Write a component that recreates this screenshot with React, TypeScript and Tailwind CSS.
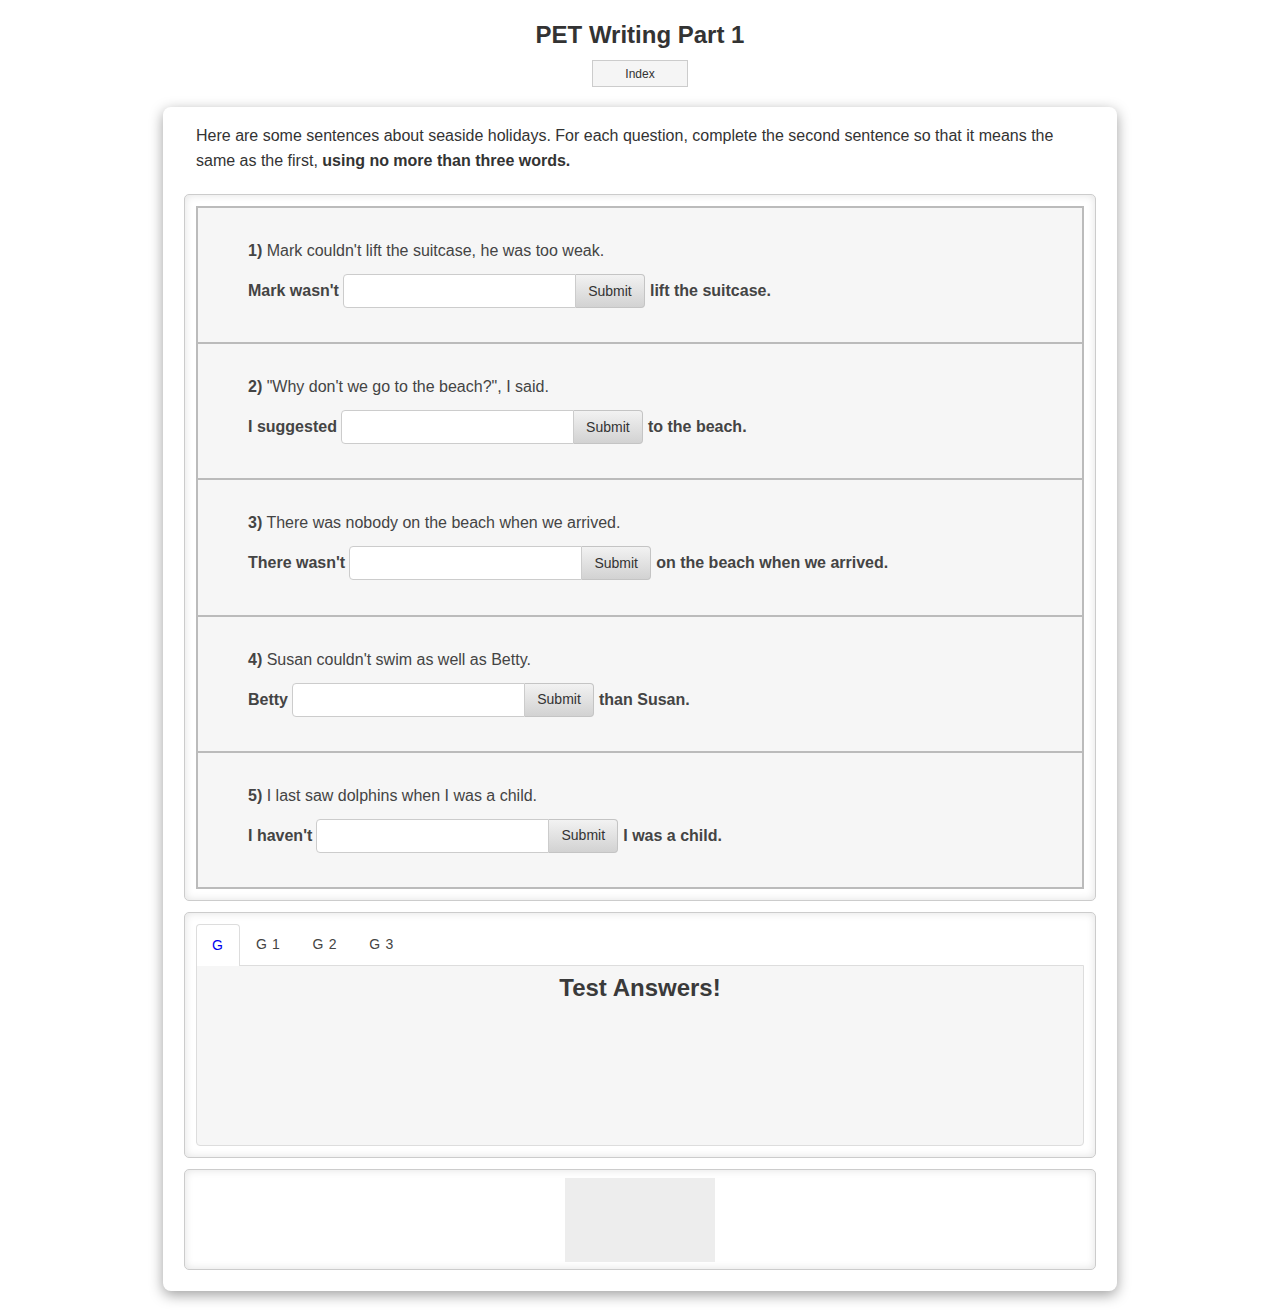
import React from "react";

const questions = [
  { n: "1)", q: "Mark couldn't lift the suitcase, he was too weak.", pre: "Mark wasn't", post: "lift the suitcase." },
  { n: "2)", q: "\"Why don't we go to the beach?\", I said.", pre: "I suggested", post: "to the beach." },
  { n: "3)", q: "There was nobody on the beach when we arrived.", pre: "There wasn't", post: "on the beach when we arrived." },
  { n: "4)", q: "Susan couldn't swim as well as Betty.", pre: "Betty", post: "than Susan." },
  { n: "5)", q: "I last saw dolphins when I was a child.", pre: "I haven't", post: "I was a child." },
];

export default function App() {
  return (
    <div className="min-h-[1315px] bg-white pb-[23px] text-[#444]" style={{ fontFamily: '"Liberation Sans", Arial, sans-serif' }}>
      <h1 className="pt-[20px] text-center text-[24px] font-bold leading-[30px] text-[#333]">PET Writing Part 1</h1>
      <div className="mt-[10px] flex justify-center">
        <button className="h-[27px] w-[96px] border border-[#ccc] bg-[#f5f5f5] text-[12px] text-[#333]">Index</button>
      </div>
      <div className="mx-auto mt-[20px] w-[954px] rounded-[8px] bg-white px-[21px] pb-[21px] pt-[16px] shadow-[0_4px_14px_rgba(0,0,0,0.38)]">
        <p className="px-[12px] text-[16px] leading-[25px] text-[#333]">
          Here are some sentences about seaside holidays. For each question, complete the second sentence so that it means the same as the first, <b>using no more than three words.</b>
        </p>

        <div className="mt-[21px] rounded-[5px] border border-[#ccc] bg-white p-[11px] shadow-[inset_0_0_8px_rgba(0,0,0,0.12)]">
          <div className="border-2 border-[#bbb] bg-[#f6f6f6]">
            {questions.map((x, i) => (
              <div key={i} className={`px-[50px] pb-[34.2px] pt-[33px] ${i > 0 ? "border-t-2 border-[#bbb]" : ""}`}>
                <div className="text-[16px] leading-[20px]">
                  <b>{x.n}</b> {x.q}
                </div>
                <div className="mt-[13px] flex items-center text-[16px] font-bold">
                  <span>{x.pre}</span>
                  <div className="ml-[4px] flex h-[34px]">
                    <input className="h-[34px] w-[233px] rounded-l-[4px] border border-[#ccc] bg-white px-2 text-[14px] outline-none" />
                    <button className="h-[34px] w-[69px] rounded-r-[4px] border border-l-0 border-[#c4c4c4] bg-gradient-to-b from-[#f2f2f2] to-[#d2d2d2] text-[14px] font-normal text-[#333]">
                      Submit
                    </button>
                  </div>
                  <span className="ml-[5px]">{x.post}</span>
                </div>
              </div>
            ))}
          </div>
        </div>

        <div className="mt-[11px] rounded-[5px] border border-[#ccc] bg-white p-[11px] shadow-[inset_0_0_8px_rgba(0,0,0,0.12)]">
          <div className="flex h-[41px] items-end">
            <div className="relative -mb-px flex h-[42px] items-center rounded-t-[4px] border border-b-0 border-[#ddd] bg-white px-[15px] text-[14px] tracking-[1px] text-[#0000ee]">G</div>
            <div className="flex h-[41px] items-center px-[16px] text-[14px] tracking-[0.7px] text-[#444]">G 1</div>
            <div className="flex h-[41px] items-center px-[16px] text-[14px] tracking-[0.7px] text-[#444]">G 2</div>
            <div className="flex h-[41px] items-center px-[16px] text-[14px] tracking-[0.7px] text-[#444]">G 3</div>
          </div>
          <div className="h-[181px] rounded-b-[4px] border border-[#ddd] bg-[#f6f6f6] pt-[7px]">
            <h2 className="text-center text-[24px] font-bold leading-[30px] text-[#3a3a3a]">Test Answers!</h2>
          </div>
        </div>

        <div className="mt-[11px] flex justify-center rounded-[5px] border border-[#ccc] bg-white pb-[7px] pt-[8px] shadow-[inset_0_0_8px_rgba(0,0,0,0.12)]">
          <div className="h-[84px] w-[150px] bg-[#ededed]" />
        </div>
      </div>
    </div>
  );
}
